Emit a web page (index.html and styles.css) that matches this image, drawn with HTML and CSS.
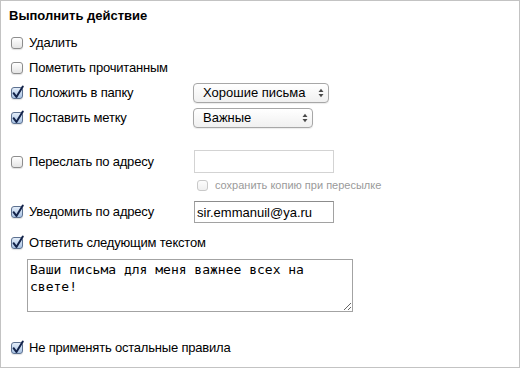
FILE: index.html
```html
<!DOCTYPE html>
<html lang="ru">
<head>
<meta charset="utf-8">
<title>Выполнить действие</title>
<link rel="stylesheet" href="styles.css">
</head>
<body>
<div class="panel">
  <div class="title">Выполнить действие</div>

  <div class="row">
    <label class="opt"><span class="cb"></span><span>Удалить</span></label>
  </div>
  <div class="row">
    <label class="opt"><span class="cb"></span><span>Пометить прочитанным</span></label>
  </div>
  <div class="row">
    <label class="opt"><span class="cb on"><svg viewBox="0 0 14 15"><path d="M2.6 8.2 L5.4 12 L11.8 1.6"/></svg></span><span>Положить в папку</span></label>
    <span class="sel sel-folder">
      <select><option>Хорошие письма</option></select>
      <svg class="arrows" viewBox="0 0 6 10"><path d="M0.5 4 L3 0.8 L5.5 4 Z M0.5 6 L3 9.2 L5.5 6 Z"/></svg>
    </span>
  </div>
  <div class="row">
    <label class="opt"><span class="cb on"><svg viewBox="0 0 14 15"><path d="M2.6 8.2 L5.4 12 L11.8 1.6"/></svg></span><span>Поставить метку</span></label>
    <span class="sel sel-label">
      <select><option>Важные</option></select>
      <svg class="arrows" viewBox="0 0 6 10"><path d="M0.5 4 L3 0.8 L5.5 4 Z M0.5 6 L3 9.2 L5.5 6 Z"/></svg>
    </span>
  </div>

  <div class="row row-fwd">
    <label class="opt"><span class="cb"></span><span>Переслать по адресу</span></label>
    <input class="field field-off" type="text" value="">
  </div>
  <div class="row row-sub">
    <span></span>
    <label class="subopt"><span class="cb cb-dis"></span><span>сохранить копию при пересылке</span></label>
  </div>

  <div class="row row-notify">
    <label class="opt"><span class="cb on"><svg viewBox="0 0 14 15"><path d="M2.6 8.2 L5.4 12 L11.8 1.6"/></svg></span><span>Уведомить по адресу</span></label>
    <input class="field" type="text" value="sir.emmanuil@ya.ru">
  </div>

  <div class="row row-reply">
    <label class="opt"><span class="cb on"><svg viewBox="0 0 14 15"><path d="M2.6 8.2 L5.4 12 L11.8 1.6"/></svg></span><span>Ответить следующим текстом</span></label>
  </div>
  <textarea class="reply">Ваши письма для меня важнее всех на свете!</textarea>

  <div class="row row-stop">
    <label class="opt"><span class="cb on"><svg viewBox="0 0 14 15"><path d="M2.6 8.2 L5.4 12 L11.8 1.6"/></svg></span><span>Не применять остальные правила</span></label>
  </div>
</div>
</body>
</html>
```
FILE: styles.css
```css
* { box-sizing: border-box; }

body {
  margin: 0;
  background: #fff;
  color: #000;
  font-family: "Liberation Sans", Arial, sans-serif;
  font-size: 13px;
}

.panel {
  width: 520px;
  height: 368px;
  border: 1px solid #c3c3c3;
  padding: 7px 8px 0 8px;
  display: flex;
  flex-direction: column;
  align-items: flex-start;
}

.title {
  font-weight: bold;
  line-height: 16px;
  margin-bottom: 6px;
}

.row {
  display: grid;
  grid-template-columns: 184px auto;
  align-items: center;
  height: 25px;
}

.opt {
  display: flex;
  align-items: center;
  gap: 6px;
  line-height: 20px;
  padding-left: 2px;
  white-space: nowrap;
  letter-spacing: -0.2px;
}

.cb {
  position: relative;
  display: inline-block;
  flex: none;
  width: 12px;
  height: 12px;
  border: 1px solid #8d8d8d;
  border-radius: 3px;
  background: linear-gradient(#ffffff, #e4e4e4);
  box-shadow: 0 1px 1px rgba(0, 0, 0, 0.12);
}

.cb.on {
  border-color: #5d7190;
  background: linear-gradient(#e3edf9, #a9c3e4);
}

.cb svg {
  position: absolute;
  left: -1px;
  top: -3px;
  width: 14px;
  height: 15px;
  overflow: visible;
}

.cb svg path {
  fill: none;
  stroke: #13234a;
  stroke-width: 2;
  stroke-linecap: round;
  stroke-linejoin: round;
}

.cb-dis {
  width: 11px;
  height: 11px;
  border-color: #c9c9c9;
  background: linear-gradient(#fdfdfd, #efefef);
  box-shadow: none;
}

.sel {
  position: relative;
  display: inline-block;
  height: 20px;
}

.sel select {
  -webkit-appearance: none;
  appearance: none;
  height: 20px;
  border: 1px solid #a7a7a7;
  border-radius: 4px;
  background: linear-gradient(#ffffff, #f0f0f0);
  box-shadow: 0 1px 1px rgba(0, 0, 0, 0.08);
  font-family: "Liberation Sans", Arial, sans-serif;
  font-size: 13px;
  color: #000;
  padding: 0 0 0 9px;
  line-height: 18px;
  outline: none;
}

.sel-folder select { width: 136px; }
.sel-label select { width: 120px; }

.sel .arrows {
  position: absolute;
  right: 5px;
  top: 5px;
  width: 6px;
  height: 10px;
}

.sel .arrows path { fill: #4a4a4a; }

.field {
  margin-left: 1px;
  width: 140px;
  height: 23px;
  border: 1px solid #d3d3d3;
  padding: 0 2px;
  font-family: "Liberation Sans", Arial, sans-serif;
  font-size: 13px;
  color: #000;
  background: #fff;
  outline: none;
}

.row-fwd {
  margin-top: 20px;
  height: 23px;
}

.row-sub {
  margin-top: 3px;
  height: 18px;
}

.subopt {
  display: flex;
  align-items: center;
  gap: 7px;
  padding-left: 4px;
  color: #9a9a9a;
  font-size: 11px;
  white-space: nowrap;
}

.row-notify {
  margin-top: 7px;
  height: 22px;
}

.row-notify .field {
  height: 22px;
  border-color: #a2a2a2;
  border-top-color: #8c8c8c;
  padding: 0 2px;
}

.row-reply {
  margin-top: 10px;
  height: 20px;
}

.reply {
  margin: 6px 0 0 18px;
  width: 326px;
  height: 53px;
  border: 1px solid #a3a3a3;
  padding: 1px 2px;
  font-family: "DejaVu Sans Mono", "Liberation Mono", monospace;
  font-size: 13px;
  line-height: 17px;
  color: #000;
  outline: none;
}

.row-stop {
  margin-top: 26px;
  height: 20px;
}
```
